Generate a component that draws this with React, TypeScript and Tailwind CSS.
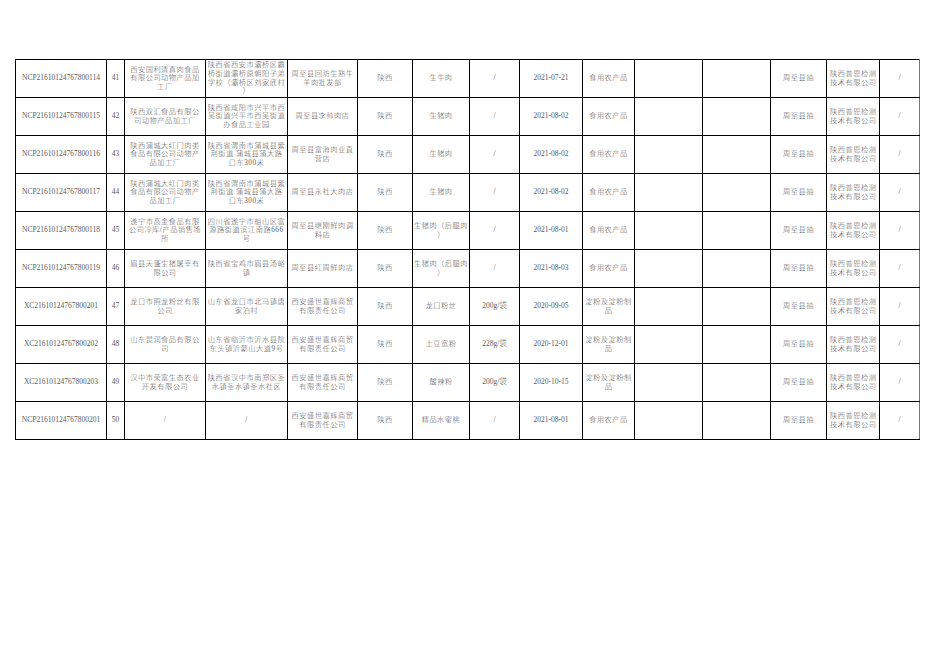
const colWidths = [91, 18, 81, 82, 70, 55, 57, 50, 63, 52, 68, 68, 56, 53, 40];

type Row = {
  code: string;
  no: string;
  maker: string[];
  makerAddr: string[];
  seller: string[];
  region: string;
  food: string[];
  spec: string;
  date: string;
  category: string[];
};

const rows: Row[] = [
  {
    code: "NCP21610124767800114",
    no: "41",
    maker: ["西安国利清真肉食品", "有限公司动物产品加", "工厂"],
    makerAddr: ["陕西省西安市灞桥区霸", "桥街道灞桥原朝阳子弟", "学校（灞桥区刘家底村", "）"],
    seller: ["周至县回坊生熟牛", "羊肉批发部"],
    region: "陕西",
    food: ["生牛肉"],
    spec: "/",
    date: "2021-07-21",
    category: ["食用农产品"],
  },
  {
    code: "NCP21610124767800115",
    no: "42",
    maker: ["陕西双汇食品有限公", "司动物产品加工厂"],
    makerAddr: ["陕西省咸阳市兴平市西", "吴街道兴平市西吴街道", "办食品工业园"],
    seller: ["周至县李帅肉店"],
    region: "陕西",
    food: ["生猪肉"],
    spec: "/",
    date: "2021-08-02",
    category: ["食用农产品"],
  },
  {
    code: "NCP21610124767800116",
    no: "43",
    maker: ["陕西蒲城大红门肉类", "食品有限公司动物产", "品加工厂"],
    makerAddr: ["陕西省渭南市蒲城县紫", "荆街道 蒲城县蒲大路", "口东300米"],
    seller: ["周至县富海肉业直", "营店"],
    region: "陕西",
    food: ["生猪肉"],
    spec: "/",
    date: "2021-08-02",
    category: ["食用农产品"],
  },
  {
    code: "NCP21610124767800117",
    no: "44",
    maker: ["陕西蒲城大红门肉类", "食品有限公司动物产", "品加工厂"],
    makerAddr: ["陕西省渭南市蒲城县紫", "荆街道 蒲城县蒲大路", "口东300米"],
    seller: ["周至县永社大肉店"],
    region: "陕西",
    food: ["生猪肉"],
    spec: "/",
    date: "2021-08-02",
    category: ["食用农产品"],
  },
  {
    code: "NCP21610124767800118",
    no: "45",
    maker: ["遂宁市高金食品有限", "公司冷库/产品销售场", "所"],
    makerAddr: ["四川省遂宁市船山区富", "源路街道滨江南路666", "号"],
    seller: ["周至县继刚鲜肉调", "料店"],
    region: "陕西",
    food: ["生猪肉（后腿肉", "）"],
    spec: "/",
    date: "2021-08-01",
    category: ["食用农产品"],
  },
  {
    code: "NCP21610124767800119",
    no: "46",
    maker: ["眉县天蓬生猪屠宰有", "限公司"],
    makerAddr: ["陕西省宝鸡市眉县汤峪", "镇"],
    seller: ["周至县红周鲜肉店"],
    region: "陕西",
    food: ["生猪肉（后腿肉", "）"],
    spec: "/",
    date: "2021-08-03",
    category: ["食用农产品"],
  },
  {
    code: "XC21610124767800201",
    no: "47",
    maker: ["龙口市照龙粉丝有限", "公司"],
    makerAddr: ["山东省龙口市北马镇唐", "家泊村"],
    seller: ["西安盛世嘉辉商贸", "有限责任公司"],
    region: "陕西",
    food: ["龙口粉丝"],
    spec: "200g/袋",
    date: "2020-09-05",
    category: ["淀粉及淀粉制", "品"],
  },
  {
    code: "XC21610124767800202",
    no: "48",
    maker: ["山东昆润食品有限公", "司"],
    makerAddr: ["山东省临沂市沂水县院", "东头镇沂蒙山大道9号"],
    seller: ["西安盛世嘉辉商贸", "有限责任公司"],
    region: "陕西",
    food: ["土豆宽粉"],
    spec: "228g/袋",
    date: "2020-12-01",
    category: ["淀粉及淀粉制", "品"],
  },
  {
    code: "XC21610124767800203",
    no: "49",
    maker: ["汉中市荣富生态农业", "开发有限公司"],
    makerAddr: ["陕西省汉中市南郑区圣", "水镇圣水镇圣水社区"],
    seller: ["西安盛世嘉辉商贸", "有限责任公司"],
    region: "陕西",
    food: ["酸辣粉"],
    spec: "200g/袋",
    date: "2020-10-15",
    category: ["淀粉及淀粉制", "品"],
  },
  {
    code: "NCP21610124767800201",
    no: "50",
    maker: ["/"],
    makerAddr: ["/"],
    seller: ["西安盛世嘉辉商贸", "有限责任公司"],
    region: "陕西",
    food: ["精品水蜜桃"],
    spec: "/",
    date: "2021-08-01",
    category: ["食用农产品"],
  },
];

// Chinese text: slightly smaller glyphs with tracking, to look like SimSun spacing
function Lines({ lines }: { lines: string[] }) {
  return (
    <>
      {lines.map((l, i) => (
        <div key={i} className="whitespace-nowrap text-[7.2px] tracking-[0.55px] leading-[8.6px]">
          {l}
        </div>
      ))}
    </>
  );
}

function Cell({
  children,
  left,
}: {
  children?: React.ReactNode;
  left?: boolean;
}) {
  return (
    <td
      className={
        "border border-black p-0 align-middle " +
        (left ? "text-left pl-[3px]" : "text-center")
      }
    >
      {children}
    </td>
  );
}

export default function App() {
  return (
    <div
      className="min-h-[662px] w-[936px] bg-white pl-[15px] pt-[59px] text-[#5a5a5a] font-light text-[7.5px] leading-[8.5px]"
      style={{ fontFamily: '"Liberation Serif", "Noto Sans CJK SC", serif' }}
    >
      <table className="table-fixed border-collapse border-r border-r-[#777] w-[904px]">
        <colgroup>
          {colWidths.map((w, i) => (
            <col key={i} style={{ width: w }} />
          ))}
        </colgroup>
        <tbody>
          {rows.map((r) => (
            <tr key={r.no + r.code} className="h-[38px]">
              <Cell>{r.code}</Cell>
              <Cell>{r.no}</Cell>
              <Cell>
                <Lines lines={r.maker} />
              </Cell>
              <Cell>
                <Lines lines={r.makerAddr} />
              </Cell>
              <Cell>
                <Lines lines={r.seller} />
              </Cell>
              <Cell>
                <Lines lines={[r.region]} />
              </Cell>
              <Cell>
                <Lines lines={r.food} />
              </Cell>
              <Cell>{r.spec}</Cell>
              <Cell>{r.date}</Cell>
              <Cell>
                <Lines lines={r.category} />
              </Cell>
              <Cell />
              <Cell />
              <Cell>
                <Lines lines={["周至县抽"]} />
              </Cell>
              <Cell left>
                <Lines lines={["陕西普恩检测", "技术有限公司"]} />
              </Cell>
              <td className="border border-black border-r-[#777] p-0 text-center align-middle">/</td>
            </tr>
          ))}
        </tbody>
      </table>
    </div>
  );
}
